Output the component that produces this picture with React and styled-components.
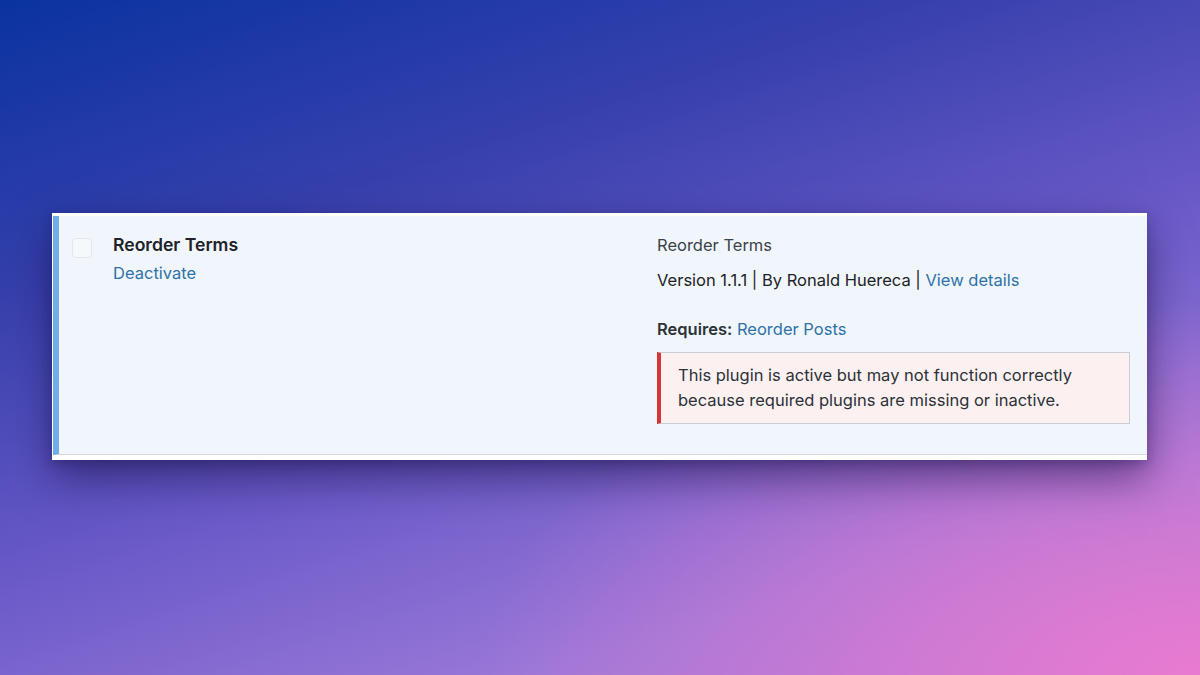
import React from "react";
import styled, { createGlobalStyle } from "styled-components";

const GlobalStyle = createGlobalStyle`
  html, body {
    margin: 0;
    padding: 0;
  }
  body {
    font-family: Inter, "Noto Sans", sans-serif;
  }
`;

const Backdrop = styled.div`
  width: 1200px;
  height: 675px;
  overflow: hidden;
  box-sizing: border-box;
  padding: 213px 53px 0 52px;
  background:
    radial-gradient(ellipse 60% 55% at 100% 100%, rgba(236, 122, 208, 0.95) 0%, rgba(236, 122, 208, 0) 100%),
    linear-gradient(162deg, #0a33a0 0%, #3640ad 28%, #6a5ac8 55%, #9a78d8 80%, #b27ad8 100%);
`;

const Card = styled.div`
  background: #ffffff;
  padding: 3px 0 5px 0;
  box-shadow: 0 18px 40px rgba(25, 15, 70, 0.55), 0 4px 10px rgba(25, 15, 70, 0.25);
`;

const PluginRow = styled.div`
  display: grid;
  grid-template-columns: 541px 1fr;
  background: #f0f6fc;
  border-left: 6px solid #72aee6;
  border-bottom: 1px solid #d8dadd;
  min-height: 239px;
  box-sizing: border-box;
  margin-left: 1px;
`;

const TitleCell = styled.div`
  display: flex;
  gap: 21px;
  padding: 17px 0 0 13px;
`;

const Check = styled.span`
  width: 20px;
  height: 20px;
  margin-top: 5px;
  box-sizing: border-box;
  border: 1px solid #e4e7ea;
  border-radius: 4px;
  background: #f6f9fc;
`;

const NameBlock = styled.div`
  display: flex;
  flex-direction: column;
  gap: 6px;
`;

const Name = styled.strong`
  font-size: 17.6px;
  line-height: 24px;
  font-weight: 600;
  color: #1d2327;
`;

const Link = styled.a`
  color: #2f72a8;
  text-decoration: none;
  font-size: 16.5px;
`;

const DescCell = styled.div`
  display: flex;
  flex-direction: column;
  padding: 17px 17px 0 57px;
  font-size: 16.5px;
  color: #1d2327;
`;

const Line = styled.div`
  line-height: 24px;
  color: ${(p) => (p.$muted ? "#3c434a" : "#1d2327")};
  margin-bottom: ${(p) => p.$gap || 0}px;
`;

const Label = styled.strong`
  font-weight: 600;
  color: #2c3338;
`;

const Notice = styled.div`
  background: #fcf0f1;
  border: 1px solid #c9ccd0;
  border-left: 4px solid #d63638;
  padding: 10px 16px 10px 17px;
  font-size: 16.5px;
  line-height: 25px;
  color: #2c3338;
`;

export default function App() {
  return (
    <>
      <GlobalStyle />
      <Backdrop>
        <Card>
          <PluginRow>
            <TitleCell>
              <Check />
              <NameBlock>
                <Name>Reorder Terms</Name>
                <Link href="#">Deactivate</Link>
              </NameBlock>
            </TitleCell>
            <DescCell>
              <Line $muted $gap={11}>Reorder Terms</Line>
              <Line $gap={25}>
                Version 1.1.1 | By Ronald Huereca | <Link href="#">View details</Link>
              </Line>
              <Line $gap={11}>
                <Label>Requires:</Label> <Link href="#">Reorder Posts</Link>
              </Line>
              <Notice>
                This plugin is active but may not function correctly
                <br />
                because required plugins are missing or inactive.
              </Notice>
            </DescCell>
          </PluginRow>
        </Card>
      </Backdrop>
    </>
  );
}
